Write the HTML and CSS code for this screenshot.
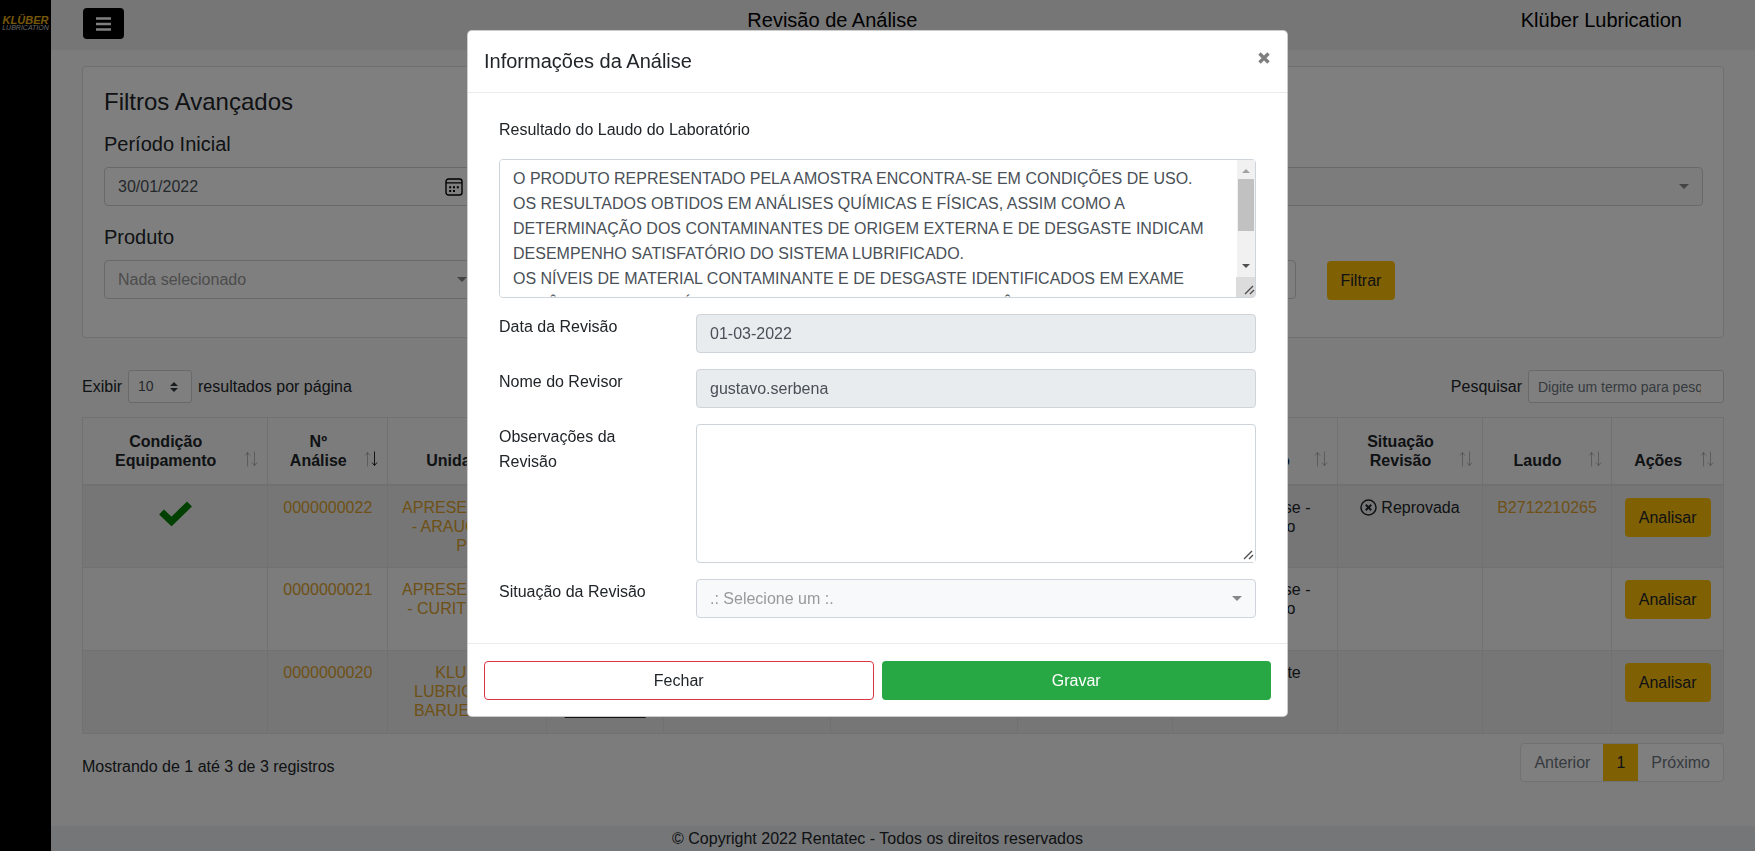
FILE: index.html
```html
<!DOCTYPE html>
<html lang="pt-BR">
<head>
    <meta charset="UTF-8">
    <meta name="viewport" content="width=device-width, initial-scale=1.0">
    <title>Revisão de Análise</title>
    <link rel="stylesheet" href="styles.css">
</head>
<body>
    <!-- shared icons -->
    <svg class="sprite" aria-hidden="true">
        <symbol id="sort" viewBox="0 0 14 16">
            <path d="M3.5 15.5V1.5M1 4.5l2.500-3 2.500 3" fill="none" stroke="currentColor" opacity="var(--up, .3)"/>
            <path d="M10.5 .5v14M8 11.5l2.500 3 2.500-3" fill="none" stroke="currentColor" opacity="var(--down, .3)"/>
        </symbol>
    </svg>

    <div class="page">
        <aside class="sidebar">
            <a href="#" class="logo">
                <span class="logo-name">KLÜBER</span>
                <span class="logo-sub">LUBRICATION</span>
            </a>
        </aside>

        <div class="content">
            <header class="topbar">
                <button type="button" class="menu-btn" aria-label="Menu">
                    <svg width="15" height="14" viewBox="0 0 15 14"><path d="M0 1.5h15M0 7h15M0 12.5h15" stroke="#fff" stroke-width="2.6"/></svg>
                </button>
                <h1 class="topbar-title">Revisão de Análise</h1>
                <span class="topbar-client">Klüber Lubrication</span>
            </header>

            <main class="main">
                <form class="card">
                    <h2>Filtros Avançados</h2>
                    <div class="filters">
                        <div class="field">
                            <label for="inicio">Período Inicial</label>
                            <input type="text" id="inicio" class="control date" value="30/01/2022">
                        </div>
                        <div class="field">
                            <label for="fim">Período Final</label>
                            <input type="text" id="fim" class="control date" value="01/03/2022">
                        </div>
                        <div class="field wide">
                            <label for="unidade">Unidade</label>
                            <select id="unidade" class="control light"><option>Nada selecionado</option></select>
                        </div>
                        <div class="field">
                            <label for="produto">Produto</label>
                            <select id="produto" class="control"><option>Nada selecionado</option></select>
                        </div>
                        <div class="field">
                            <label for="condicao">Condição</label>
                            <select id="condicao" class="control"><option>Nada selecionado</option></select>
                        </div>
                        <div class="field">
                            <label for="situacao">Situação</label>
                            <select id="situacao" class="control"><option>Nada selecionado</option></select>
                        </div>
                        <div class="field action">
                            <button type="button" class="btn btn-warning">Filtrar</button>
                        </div>
                    </div>
                </form>

                <div class="table-tools">
                    <div class="tool">
                        <label for="tamanho">Exibir</label>
                        <select id="tamanho" class="page-size"><option>10</option><option>25</option></select>
                        <span>resultados por página</span>
                    </div>
                    <div class="tool">
                        <label for="busca">Pesquisar</label>
                        <input type="text" id="busca" placeholder="Digite um termo para pesquisar">
                    </div>
                </div>

                <table class="results">
                    <colgroup>
                        <col class="c-cond"><col class="c-num"><col class="c-unit"><col class="c-stage">
                        <col class="c-equip"><col class="c-comp"><col class="c-prod"><col class="c-lab">
                        <col class="c-rev"><col class="c-report"><col class="c-act">
                    </colgroup>
                    <thead>
                        <tr>
                            <th><div class="th"><span>Condição Equipamento</span><svg><use href="#sort"/></svg></div></th>
                            <th><div class="th sorted"><span>Nº Análise</span><svg><use href="#sort"/></svg></div></th>
                            <th><div class="th"><span>Unidade</span><svg><use href="#sort"/></svg></div></th>
                            <th><div class="th"><span>Etapa</span><svg><use href="#sort"/></svg></div></th>
                            <th><div class="th"><span>Equipamento</span><svg><use href="#sort"/></svg></div></th>
                            <th><div class="th"><span>Compartimento</span><svg><use href="#sort"/></svg></div></th>
                            <th><div class="th"><span>Produto</span><svg><use href="#sort"/></svg></div></th>
                            <th><div class="th"><span>Laboratório</span><svg><use href="#sort"/></svg></div></th>
                            <th><div class="th"><span>Situação Revisão</span><svg><use href="#sort"/></svg></div></th>
                            <th><div class="th"><span>Laudo</span><svg><use href="#sort"/></svg></div></th>
                            <th><div class="th"><span>Ações</span><svg><use href="#sort"/></svg></div></th>
                        </tr>
                    </thead>
                    <tbody>
                        <tr>
                            <td><svg class="check" viewBox="0 0 33 25"><path d="M2.5 11l10 9.500L30.500 3" fill="none" stroke="green" stroke-width="7"/></svg></td>
                            <td><a href="#">0000000022</a></td>
                            <td><a href="#">APRESENTAÇÃO - ARAUCARIA - PR</a></td>
                            <td><a href="#" class="stage">Enviado<br>para o<br>Laboratório</a></td>
                            <td></td>
                            <td></td>
                            <td></td>
                            <td>Enviar Análise - Laboratório</td>
                            <td>
                                <span class="status">
                                    <svg width="17" height="17" viewBox="0 0 17 17" fill="none" stroke="currentColor"><circle cx="8.5" cy="8.5" r="7.5" stroke-width="1.5"/><path d="M5.8 5.8l5.4 5.4M11.2 5.8l-5.4 5.4" stroke-width="2"/></svg>
                                    Reprovada
                                </span>
                            </td>
                            <td><a href="#">B2712210265</a></td>
                            <td><button type="button" class="btn btn-warning">Analisar</button></td>
                        </tr>
                        <tr>
                            <td></td>
                            <td><a href="#">0000000021</a></td>
                            <td><a href="#">APRESENTAÇÃO - CURITIBA - PR</a></td>
                            <td><a href="#" class="stage">Enviado<br>para o<br>Laboratório</a></td>
                            <td></td>
                            <td></td>
                            <td></td>
                            <td>Enviar Análise - Laboratório</td>
                            <td></td>
                            <td></td>
                            <td><button type="button" class="btn btn-warning">Analisar</button></td>
                        </tr>
                        <tr>
                            <td></td>
                            <td><a href="#">0000000020</a></td>
                            <td><a href="#">KLUBER LUBRICATION BARUERI - SP</a></td>
                            <td><a href="#" class="stage">Enviado<br>para o<br>Laboratório</a></td>
                            <td></td>
                            <td></td>
                            <td></td>
                            <td>Componente</td>
                            <td></td>
                            <td></td>
                            <td><button type="button" class="btn btn-warning">Analisar</button></td>
                        </tr>
                    </tbody>
                </table>

                <div class="table-footer">
                    <p>Mostrando de 1 até 3 de 3 registros</p>
                    <nav class="pagination" aria-label="Paginação">
                        <a href="#">Anterior</a>
                        <a href="#" class="active">1</a>
                        <a href="#">Próximo</a>
                    </nav>
                </div>
            </main>

            <footer class="footer">© Copyright 2022 Rentatec - Todos os direitos reservados</footer>
        </div>
    </div>

    <div class="backdrop">
        <div class="modal" role="dialog" aria-modal="true" aria-labelledby="modalTitle">
            <div class="modal-header">
                <h2 id="modalTitle">Informações da Análise</h2>
                <button type="button" class="close" aria-label="Fechar janela">
                    <svg width="12" height="12" viewBox="0 0 12 12"><path d="M1.5 1.5l9 9M10.5 1.5l-9 9" stroke="currentColor" stroke-width="3.4"/></svg>
                </button>
            </div>

            <form class="modal-body">
                <div class="report">
                    <label for="laudo">Resultado do Laudo do Laboratório</label>
                    <div class="report-box">
                        <textarea id="laudo" class="control" rows="5" readonly>O PRODUTO REPRESENTADO PELA AMOSTRA ENCONTRA-SE EM CONDIÇÕES DE USO.
OS RESULTADOS OBTIDOS EM ANÁLISES QUÍMICAS E FÍSICAS, ASSIM COMO A DETERMINAÇÃO DOS CONTAMINANTES DE ORIGEM EXTERNA E DE DESGASTE INDICAM DESEMPENHO SATISFATÓRIO DO SISTEMA LUBRIFICADO.
OS NÍVEIS DE MATERIAL CONTAMINANTE E DE DESGASTE IDENTIFICADOS EM EXAME
DA LÂMINA FERROGRÁFICA DEMONSTRAM-SE EM BAIXA INCIDÊNCIA. MANTENHA SOB
MONITORAMENTO O EQUIPAMENTO.</textarea>
                        <svg class="scrollbar" width="19" height="137" viewBox="0 0 19 137" aria-hidden="true">
                            <path d="M1 0h18v117H1z" fill="#f1f1f1"/>
                            <path d="M6 13h8l-4-4z" fill="#a3a3a3"/>
                            <path d="M2 19h16v52H2z" fill="#c1c1c1"/>
                            <path d="M6 104h8l-4 4z" fill="#505050"/>
                            <path d="M0 117h19v20H0z" fill="#dcdcdc"/>
                            <path d="M9 134l8-8M14 134l4-4" stroke="#505050" stroke-width="1.4"/>
                        </svg>
                    </div>
                </div>

                <div class="form-row">
                    <label for="data">Data da Revisão</label>
                    <input type="text" id="data" class="control" value="01-03-2022" readonly>
                </div>
                <div class="form-row">
                    <label for="revisor">Nome do Revisor</label>
                    <input type="text" id="revisor" class="control" value="gustavo.serbena" readonly>
                </div>
                <div class="form-row">
                    <label for="obs">Observações da Revisão</label>
                    <textarea id="obs" class="control" rows="5"></textarea>
                </div>
                <div class="form-row">
                    <label for="revisao">Situação da Revisão</label>
                    <select id="revisao" class="control light"><option>.: Selecione um :.</option><option>Aprovada</option><option>Reprovada</option></select>
                </div>
            </form>

            <div class="modal-footer">
                <button type="button" class="btn btn-outline">Fechar</button>
                <button type="button" class="btn btn-success">Gravar</button>
            </div>
        </div>
    </div>
</body>
</html>
```
FILE: styles.css
```css
* {
    margin: 0;
    padding: 0;
    box-sizing: border-box;
}

body {
    font-family: "Liberation Sans", Arial, sans-serif;
    font-size: 16px;
    line-height: 25px;
    color: #212529;
    background: #f8f8f8;
}

input, select, textarea, button {
    font: inherit;
}

h1, h2 {
    font-weight: normal;
}

a {
    color: #dda22e;
    text-decoration: none;
}

.sprite {
    display: none;
}

.page {
    display: flex;
    min-height: 100vh;
}

/* sidebar */
.sidebar {
    flex: 0 0 51px;
    background: #000;
}

.logo {
    display: flex;
    flex-direction: column;
    align-items: center;
    padding-top: 16px;
    font-style: italic;
}

.logo-name {
    font-size: 11px;
    line-height: 9px;
    font-weight: bold;
    color: #eab010;
}

.logo-sub {
    font-size: 7px;
    line-height: 6px;
    color: #ccc;
}

.content {
    flex: 1;
    min-width: 0;
    display: flex;
    flex-direction: column;
}

/* top bar */
.topbar {
    display: flex;
    justify-content: space-between;
    align-items: flex-start;
    height: 50px;
    padding: 8px 73px 0 32px;
    background: #ececec;
    color: #000;
}

.menu-btn {
    display: flex;
    align-items: center;
    justify-content: center;
    width: 41px;
    height: 31px;
    background: #000;
    border: none;
    border-radius: 4px;
}

.topbar-title, .topbar-client {
    font-size: 20px;
    line-height: 24px;
}

.topbar-title {
    margin-left: 20px;
}

.main {
    flex: 1;
    padding: 16px 31px 0;
}

/* filters */
.card {
    padding: 20px 20px 37px 21px;
    background: #fff;
    border: 1px solid #dfdfdf;
    border-radius: 4px;
}

.card h2 {
    font-size: 24px;
    line-height: 30px;
    margin-bottom: 13px;
}

.filters {
    display: grid;
    grid-template-columns: repeat(4, 1fr);
    gap: 16px 31px;
}

.field {
    min-height: 77px;
}

.field label {
    display: block;
    font-size: 20px;
    line-height: 29px;
    margin-bottom: 8px;
}

.field.wide {
    grid-column: span 2;
}

.field.action {
    align-self: end;
    min-height: 0;
}

.control {
    display: block;
    width: 100%;
    height: 39px;
    padding: 6px 13px;
    color: #495057;
    background: #fff;
    border: 1px solid #ced4da;
    border-radius: 4px;
    outline: none;
}

input.control[readonly] {
    background: #e9ecef;
}

select.control {
    appearance: none;
    color: #999;
    background: #fff url("data:image/svg+xml,%3Csvg xmlns='http://www.w3.org/2000/svg' width='10' height='5'%3E%3Cpath d='M0 0h10L5 5z' fill='%23888'/%3E%3C/svg%3E") no-repeat right 13px center;
}

select.control.light {
    background-color: #f8f9fa;
}

.date {
    background: #fff url("data:image/svg+xml,%3Csvg xmlns='http://www.w3.org/2000/svg' width='18' height='18' fill='none' stroke='%23000'%3E%3Crect x='1' y='1' width='16' height='16' rx='2.5' stroke-width='1.4'/%3E%3Cpath d='M1 4.8h16' stroke-width='1.2'/%3E%3Cpath d='M4.2 9.2h2M8 9.2h2M11.8 9.2h2M4.2 13h2M8 13h2' stroke-width='2'/%3E%3C/svg%3E") no-repeat right 17px center;
}

.btn {
    height: 39px;
    padding: 0 13px;
    border: 1px solid transparent;
    border-radius: 4px;
    cursor: pointer;
}

.btn-warning {
    color: #212529;
    background: #ffc107;
}

/* table */
.table-tools {
    display: flex;
    justify-content: space-between;
    margin: 32px 0 14px;
}

.tool {
    display: flex;
    align-items: center;
    gap: 6px;
}

.page-size, .tool input {
    height: 33px;
    padding: 0 9px;
    font-size: 14px;
    color: #495057;
    background: #fff;
    border: 1px solid #ced4da;
    border-radius: 3px;
}

.page-size {
    width: 64px;
    appearance: none;
    background: #fff url("data:image/svg+xml,%3Csvg xmlns='http://www.w3.org/2000/svg' width='8' height='10'%3E%3Cpath d='M0 4l4-4 4 4zM0 6h8l-4 4z' fill='%23343a40'/%3E%3C/svg%3E") no-repeat right 13px center;
}

.tool input {
    width: 196px;
    padding-right: 22px;
}

.tool input::placeholder {
    color: #6c757d;
}

.results {
    width: 100%;
    table-layout: fixed;
    border-collapse: collapse;
    line-height: 19px;
    text-align: center;
}

.results th, .results td {
    border: 1px solid #dee2e6;
}

.results th {
    height: 67px;
    padding: 12px 9px 14px 12px;
    vertical-align: bottom;
    border-bottom-width: 2px;
}

.results td {
    height: 83px;
    padding: 12px;
    vertical-align: top;
}

.results tbody tr:nth-child(odd) {
    background: #ededed;
}

.th {
    display: flex;
    align-items: flex-end;
    gap: 8px;
}

.th span {
    flex: 1;
    min-width: 0;
}

.th svg {
    flex: none;
    width: 14px;
    height: 16px;
    margin-bottom: 3px;
}

.th.sorted {
    --down: 1;
}

.c-cond { width: 11.3%; }
.c-num { width: 7.3%; }
.c-unit { width: 9.7%; }
.c-stage { width: 7.1%; }
.c-equip { width: 10.2%; }
.c-comp { width: 11.4%; }
.c-prod { width: 9.4%; }
.c-lab { width: 10.1%; }
.c-rev { width: 8.8%; }
.c-report { width: 7.9%; }
.c-act { width: 6.8%; }

.check {
    width: 33px;
    height: 25px;
    margin-top: 3px;
}

.stage {
    color: #212529;
    text-decoration: underline;
}

.status {
    display: inline-flex;
    align-items: center;
    gap: 4px;
}

.table-footer {
    display: flex;
    justify-content: space-between;
    padding-top: 9px;
}

.table-footer p {
    padding-top: 11px;
}

.pagination {
    display: flex;
    height: 39px;
    background: #fff;
    border: 1px solid #dee2e6;
    border-radius: 4px;
}

.pagination a {
    padding: 6px 13px;
    color: #6c757d;
}

.pagination .active {
    color: #212529;
    background: #ffc107;
}

.footer {
    padding-right: 51px;
    background: #e9ecef;
    text-align: center;
}

/* modal */
.backdrop {
    position: fixed;
    inset: 0;
    padding: 30px 16px;
    background: rgba(0, 0, 0, 0.5);
    overflow: auto;
}

.modal {
    max-width: 821px;
    margin: 0 auto;
    background: #fff;
    border: 1px solid rgba(0, 0, 0, 0.2);
    border-radius: 5px;
}

.modal-header {
    display: flex;
    justify-content: space-between;
    align-items: flex-start;
    padding: 15px 17px 15px 16px;
    border-bottom: 1px solid #e9ecef;
}

.modal-header h2 {
    font-size: 20px;
    line-height: 31px;
}

.close {
    display: flex;
    padding: 6px 0;
    color: #7f7f7f;
    background: none;
    border: none;
    cursor: pointer;
}

.modal-body {
    display: flex;
    flex-direction: column;
    gap: 16px;
    padding: 24px 31px 25px;
}

.report label {
    display: block;
    margin-bottom: 17px;
}

.report-box {
    position: relative;
}

textarea.control {
    height: auto;
    resize: vertical;
}

#laudo {
    padding-right: 30px;
    resize: none;
}

/* always visible scrollbar of the report text */
.scrollbar {
    position: absolute;
    top: 1px;
    right: 1px;
}

textarea::-webkit-resizer {
    background: #fff url("data:image/svg+xml,%3Csvg xmlns='http://www.w3.org/2000/svg' width='15' height='15'%3E%3Cpath d='M4 12l8-8M9 12l4-4' stroke='%23505050' stroke-width='1.4'/%3E%3C/svg%3E") no-repeat right bottom;
}

.form-row {
    display: grid;
    grid-template-columns: 166fr 560fr;
    gap: 31px;
    align-items: start;
}

.modal-footer {
    display: flex;
    gap: 8px;
    padding: 17px 16px 16px;
    border-top: 1px solid #e9ecef;
}

.modal-footer .btn {
    flex: 1;
}

.btn-outline {
    color: #212529;
    background: #fff;
    border-color: #dc3545;
}

.btn-success {
    color: #fff;
    background: #28a745;
}
```
